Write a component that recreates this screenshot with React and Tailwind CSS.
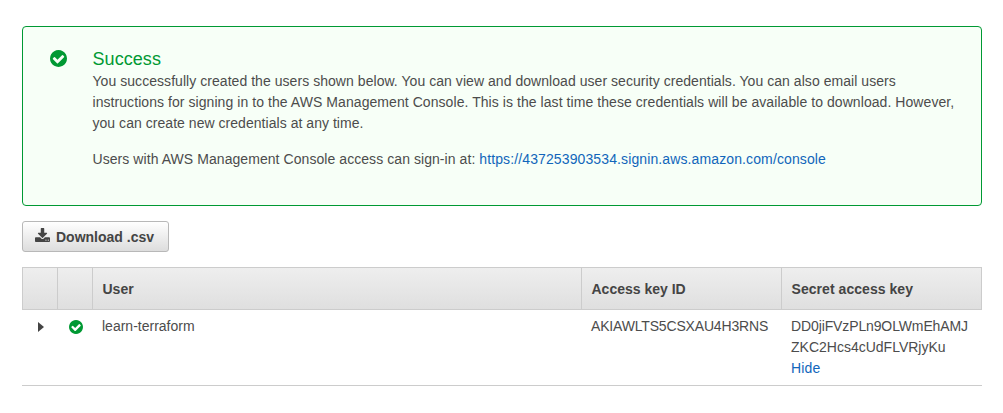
function CheckCircle({ className }) {
  return (
    <svg viewBox="0 0 1536 1536" className={className} fill="currentColor" aria-hidden="true">
      <path d="M1284 606q0-28-18-46l-91-90q-19-19-45-19t-45 19l-408 407-226-226q-19-19-45-19t-45 19l-91 90q-18 18-18 46 0 27 18 45l362 362q19 19 45 19 27 0 46-19l543-543q18-18 18-45zm252 162q0 209-103 385.500t-279.500 279.500-385.500 103-385.500-103-279.500-279.500-103-385.500 103-385.500 279.500-279.500 385.500-103 385.500 103 279.500 279.500 103 385.500z" />
    </svg>
  );
}

function DownloadIcon({ className }) {
  return (
    <svg viewBox="0 0 1664 1536" className={className} fill="currentColor" aria-hidden="true">
      <path d="M1280 1344q0-26-19-45t-45-19-45 19-19 45 19 45 45 19 45-19 19-45zm256 0q0-26-19-45t-45-19-45 19-19 45 19 45 45 19 45-19 19-45zm128-224v320q0 40-28 68t-68 28h-1472q-40 0-68-28t-28-68v-320q0-40 28-68t68-28h465l135 136q58 56 136 56t136-56l136-136h464q40 0 68 28t28 68zm-325-569q17 41-14 70l-448 448q-18 19-45 19t-45-19l-448-448q-31-29-14-70 17-39 59-39h256v-448q0-26 19-45t45-19h256q26 0 45 19t19 45v448h256q42 0 59 39z" />
    </svg>
  );
}

function SuccessPanel() {
  return (
    <section className="flex h-[180px] rounded-[4px] border border-[#009933] bg-[#f7fff7] pt-[22px] pl-[27px]">
      <CheckCircle className="mt-[0.5px] size-[17px] shrink-0 text-[#009933]" />
      <div className="ml-[25.5px] whitespace-nowrap">
        <h2 className="-mt-px mb-px text-[18px] leading-[22px] tracking-[0.06px] text-[#009933]">Success</h2>
        <p className="leading-[21px]">
          <span className="tracking-[0.049px]">You successfully created the users shown below. You can view and download user security credentials. You can also email users</span>
          <br />
          <span className="tracking-[0.064px]">instructions for signing in to the AWS Management Console. This is the last time these credentials will be available to download. However,</span>
          <br />
          <span className="tracking-[0.04px]">you can create new credentials at any time.</span>
        </p>
        <p className="mt-[15px] leading-[21px]">
          <span className="tracking-[0.065px]">Users with AWS Management Console access can sign-in at: </span>
          <a className="tracking-[0.115px] text-[#1166bb]" href="#console">https://437253903534.signin.aws.amazon.com/console</a>
        </p>
      </div>
    </section>
  );
}

function UsersTable() {
  return (
    <div className="mt-[15px] h-[119px] w-[960px] border-b border-[#cccccc]">
      <table className="w-[960px] table-fixed border-collapse text-left">
        <colgroup>
          <col className="w-[35px]" />
          <col className="w-[35px]" />
          <col className="w-[489px]" />
          <col className="w-[200px]" />
          <col className="w-[200px]" />
        </colgroup>
        <thead>
          <tr className="h-[42px] bg-linear-to-b from-[#eeeeee] to-[#dfdfdf] text-[#444444] *:border *:border-[#cccccc] *:pt-[2px] *:pb-0 *:pl-[9.5px]">
            <th />
            <th />
            <th>User</th>
            <th>Access key ID</th>
            <th className="tracking-[0.05px]">Secret access key</th>
          </tr>
        </thead>
        <tbody>
          <tr className="align-top leading-[21px] *:pt-[6px] *:pb-0 *:pl-[9.5px]">
            <td>
              <svg viewBox="0 0 6 10" className="mt-[6px] ml-[6px] h-[10px] w-[6px]" fill="#444444" aria-hidden="true">
                <path d="M0 0 6 5 0 10z" />
              </svg>
            </td>
            <td>
              <CheckCircle className="mt-[4px] ml-[2px] size-[14px] text-[#009933]" />
            </td>
            <td>learn-terraform</td>
            <td className="tracking-[-0.17px]">AKIAWLTS5CSXAU4H3RNS</td>
            <td className="whitespace-nowrap">
              <span className="tracking-[-0.12px]">DD0jiFVzPLn9OLWmEhAMJ</span>
              <br />
              <span>ZKC2Hcs4cUdFLVRjyKu</span>
              <br />
              <a className="tracking-[0.2px] text-[#1166bb]" href="#hide">Hide</a>
            </td>
          </tr>
        </tbody>
      </table>
    </div>
  );
}

export default function App() {
  return (
    <main className="h-[413px] w-[1003px] bg-white pt-[26px] pr-[21px] pl-[22px] font-['Liberation_Sans',Arial,sans-serif] text-[14px] text-[#4c4c4c]">
      <SuccessPanel />
      <button className="mt-[15px] flex h-[31px] w-[147px] items-center rounded-[3px] border border-[#b8b8b8] bg-linear-to-b from-white to-[#dddddd] pl-[12px] font-bold text-[#444444]">
        <DownloadIcon className="mr-[6px] mb-[3px] h-[14px] w-[15px]" />
        <span className="pt-[2px]">Download .csv</span>
      </button>
      <UsersTable />
    </main>
  );
}
